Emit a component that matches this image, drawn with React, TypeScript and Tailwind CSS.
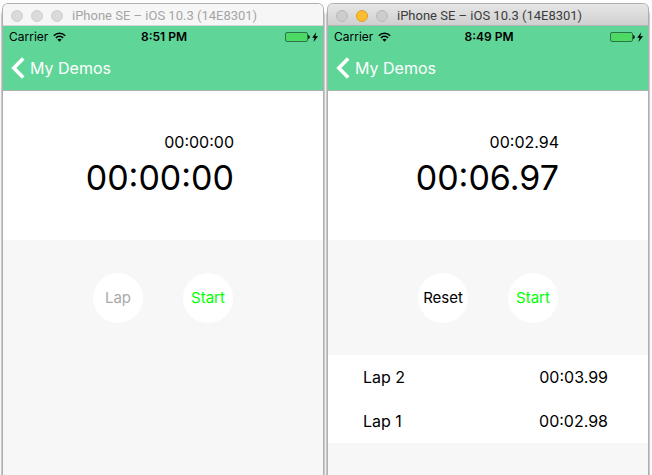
type Lap = { name: string; time: string };

type Phone = {
  active: boolean;
  clock: string;
  lapTime: string;
  totalTime: string;
  leftAction: string;
  laps: Lap[];
};

const phones: Phone[] = [
  { active: false, clock: "8:51 PM", lapTime: "00:00:00", totalTime: "00:00:00", leftAction: "Lap", laps: [] },
  {
    active: true,
    clock: "8:49 PM",
    lapTime: "00:02.94",
    totalTime: "00:06.97",
    leftAction: "Reset",
    laps: [
      { name: "Lap 2", time: "00:03.99" },
      { name: "Lap 1", time: "00:02.98" },
    ],
  },
];

function TitleBar({ active }: { active: boolean }) {
  const dot = "size-3 rounded-full border";
  const idle = active ? "border-[#b9b9b9] bg-[#cdcdcd]" : "border-[#cfcfcf] bg-[#dadada]";
  return (
    <header
      className={`flex h-[22px] items-center rounded-t-[5px] border-b pt-0.5 pl-2 ${
        active
          ? "border-[#b4b4b4] bg-linear-to-b from-[#e6e6e6] to-[#d0d0d0] text-[#3c3c3c]"
          : "border-[#d6d6d6] bg-[#f6f6f6] text-[#a5a5a5]"
      }`}
    >
      <div className="flex gap-2">
        <button aria-label="Close" className={`${dot} ${idle}`} />
        <button aria-label="Minimize" className={`${dot} ${active ? "border-[#e0a030] bg-[#fdbd2e]" : idle}`} />
        <button aria-label="Zoom" className={`${dot} ${idle}`} />
      </div>
      <h1 className="ml-[9px] whitespace-nowrap font-[Roboto,sans-serif] text-[13px] leading-5">
        iPhone SE – iOS 10.3 (14E8301)
      </h1>
    </header>
  );
}

function StatusBar({ clock }: { clock: string }) {
  return (
    <div className="grid h-[22px] grid-cols-3 items-center pr-1 pl-[6px] text-xs">
      <div className="flex items-center gap-[5px]">
        <span>Carrier</span>
        <svg width="13" height="10" viewBox="0 0 13 10" fill="none" stroke="black" strokeWidth="1.6">
          <path d="M0.8 3.7C4 .4 9 .4 12.2 3.7M2.9 5.9C5 3.9 8 3.9 10.1 5.9" />
          <path d="M6.5 9.7 4.4 7.6C5.6 6.6 7.4 6.6 8.6 7.6Z" fill="black" stroke="none" />
        </svg>
      </div>
      <time className="text-center font-semibold">{clock}</time>
      <svg className="justify-self-end" width="34" height="11" viewBox="0 0 34 11">
        <rect x="0.5" y="0.5" width="22" height="9" rx="1.5" fill="#4cd964" stroke="#2c7449" />
        <path d="M23.2 3c2 .2 2 3.8 0 4z" fill="black" />
        <path d="M31.2 0.3 27.2 5.7h2.4L28.4 10 33.1 4.3h-2.8z" fill="black" />
      </svg>
    </div>
  );
}

function RoundButton({ label, color, disabled }: { label: string; color: string; disabled?: boolean }) {
  return (
    <button disabled={disabled} className={`size-[50px] rounded-full bg-white text-center text-[15px] ${color}`}>
      {label}
    </button>
  );
}

function PhoneWindow({ phone }: { phone: Phone }) {
  return (
    <section className="flex min-w-0 flex-1 flex-col rounded-t-[5px] bg-[#f7f7f7] shadow-[0_0_0_1px_#b0b0b0,0_6px_1px_2px_#c4c4c4]">
      <TitleBar active={phone.active} />
      <div className="border-b border-[#a9b4ad] bg-[#5fd598]">
        <StatusBar clock={phone.clock} />
        <nav className="flex h-[42px] items-center pb-0.5 pl-2">
          <a href="#demos" className="flex items-center gap-[5px] text-base text-white">
            <svg width="14" height="22" viewBox="0 0 14 22" fill="none" stroke="white" strokeWidth="3.6">
              <path d="M12.2 1.5 2.8 11l9.4 9.5" />
            </svg>
            My Demos
          </a>
        </nav>
      </div>
      <div className="h-[149px] bg-white pt-[39px] pr-[89px] text-right text-black">
        <p className="text-base leading-6">{phone.lapTime}</p>
        <p className="text-[34px] leading-[48px]">{phone.totalTime}</p>
      </div>
      <div className="flex h-[115px] items-start justify-center gap-10 pt-[33px]">
        <RoundButton
          label={phone.leftAction}
          color={phone.active ? "text-black" : "text-[#aaaaaa]"}
          disabled={!phone.active}
        />
        <RoundButton label="Start" color="text-[#00ff00]" />
      </div>
      <ul className="bg-white text-base text-black">
        {phone.laps.map((lap) => (
          <li key={lap.name} className="flex h-11 items-center justify-between pr-10 pl-[35px]">
            <span>{lap.name}</span>
            <span>{lap.time}</span>
          </li>
        ))}
      </ul>
    </section>
  );
}

export default function App() {
  return (
    <main className="flex min-h-screen gap-[5px] overflow-hidden bg-[#fdfdfd] pt-1 pr-1 pl-[3px] font-[Inter,sans-serif]">
      {phones.map((phone) => (
        <PhoneWindow key={phone.clock} phone={phone} />
      ))}
    </main>
  );
}
